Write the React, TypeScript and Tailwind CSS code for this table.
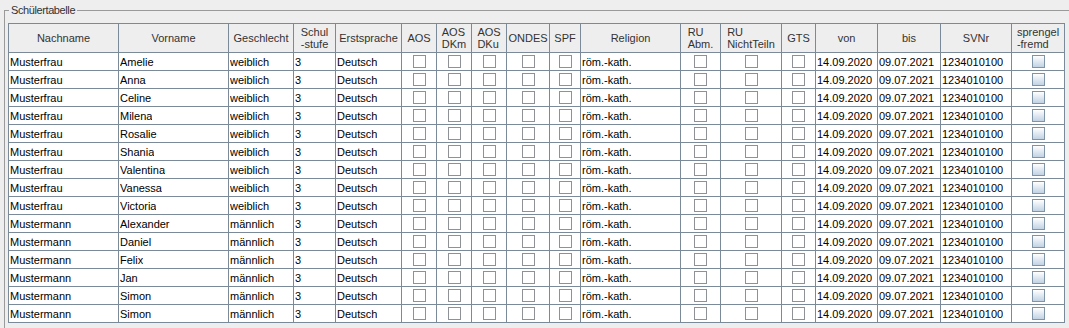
import React from 'react';

type Col = { label: string[]; w: string; kind: 'text' | 'check' | 'lock' };

const cols: Col[] = [
    { label: ['Nachname'], w: 'w-[110px]', kind: 'text' },
    { label: ['Vorname'], w: 'w-[110px]', kind: 'text' },
    { label: ['Geschlecht'], w: 'w-[65px]', kind: 'text' },
    { label: ['Schul', '-stufe'], w: 'w-[42px]', kind: 'text' },
    { label: ['Erstsprache'], w: 'w-[66px]', kind: 'text' },
    { label: ['AOS'], w: 'w-[35px]', kind: 'check' },
    { label: ['AOS', 'DKm'], w: 'w-[35px]', kind: 'check' },
    { label: ['AOS', 'DKu'], w: 'w-[35px]', kind: 'check' },
    { label: ['ONDES'], w: 'w-[43px]', kind: 'check' },
    { label: ['SPF'], w: 'w-[31px]', kind: 'check' },
    { label: ['Religion'], w: 'w-[100px]', kind: 'text' },
    { label: ['RU', 'Abm.'], w: 'w-[40px]', kind: 'check' },
    { label: ['RU', 'NichtTeiln'], w: 'w-[61px]', kind: 'check' },
    { label: ['GTS'], w: 'w-[34px]', kind: 'check' },
    { label: ['von'], w: 'w-[62px]', kind: 'text' },
    { label: ['bis'], w: 'w-[63px]', kind: 'text' },
    { label: ['SVNr'], w: 'w-[71px]', kind: 'text' },
    { label: ['sprengel', '-fremd'], w: 'w-[53px]', kind: 'lock' },
];

const people: [string, string, string][] = [
    ['Musterfrau', 'Amelie', 'weiblich'],
    ['Musterfrau', 'Anna', 'weiblich'],
    ['Musterfrau', 'Celine', 'weiblich'],
    ['Musterfrau', 'Milena', 'weiblich'],
    ['Musterfrau', 'Rosalie', 'weiblich'],
    ['Musterfrau', 'Shania', 'weiblich'],
    ['Musterfrau', 'Valentina', 'weiblich'],
    ['Musterfrau', 'Vanessa', 'weiblich'],
    ['Musterfrau', 'Victoria', 'weiblich'],
    ['Mustermann', 'Alexander', 'männlich'],
    ['Mustermann', 'Daniel', 'männlich'],
    ['Mustermann', 'Felix', 'männlich'],
    ['Mustermann', 'Jan', 'männlich'],
    ['Mustermann', 'Simon', 'männlich'],
    ['Mustermann', 'Simon', 'männlich'],
];

function rowValues(p: [string, string, string]) {
    // same order as cols; '' for checkbox columns
    return [p[0], p[1], p[2], '3', 'Deutsch', '', '', '', '', '', 'röm.-kath.', '', '', '', '14.09.2020', '09.07.2021', '1234010100', ''];
}

function Box({ locked }: { locked?: boolean }) {
    if (locked) {
        return <span className="block w-[13px] h-[13px] border border-[#8094a8] bg-linear-to-b from-[#ffffff] to-[#c2d2e3]" />;
    }
    return <span className="block w-[13px] h-[13px] border border-[#8e9296] bg-white" />;
}

function App() {
    return (
        <div className="relative w-[1069px] h-[328px] bg-[#eeeeee] overflow-hidden pt-[10px] pl-[4px] text-[11px] text-black" style={{ fontFamily: '"Liberation Sans", Arial, sans-serif' }}>
            <div className="absolute left-[9px] top-[3px] px-[2px] bg-[#eeeeee] leading-[14px] text-[#333333] tracking-[-0.4px]">Schülertabelle</div>
            <div className="h-[318px] border-l border-t border-[#9a9a9a] pt-[12px] pl-[3px]">
                <div className="w-[1057px] border-l border-t border-[#7a8a99] bg-white">
                    <div className="flex h-[29px] bg-[#eeeeee] text-[#333333]">
                        {cols.map((c, i) => (
                            <div key={i} className={`${c.w} shrink-0 h-full border-r border-b border-[#7a8a99] flex items-center justify-center`}>
                                <div className="text-left leading-[12px] whitespace-nowrap">
                                    {c.label.map((l, j) => <div key={j}>{l}</div>)}
                                </div>
                            </div>
                        ))}
                    </div>
                    {people.map((p, r) => {
                        const vals = rowValues(p);
                        return (
                            <div key={r} className="flex h-[18px]">
                                {cols.map((c, i) => (
                                    <div key={i} className={`${c.w} shrink-0 h-full border-r border-b border-[#7a8a99] flex items-center ${c.kind === 'text' ? 'pl-[1px]' : 'justify-center'}`}>
                                        {c.kind === 'text' && <span className="leading-[14px] whitespace-nowrap overflow-hidden">{vals[i]}</span>}
                                        {c.kind === 'check' && <Box />}
                                        {c.kind === 'lock' && <Box locked />}
                                    </div>
                                ))}
                            </div>
                        );
                    })}
                </div>
            </div>
        </div>
    );
}

export default App;
